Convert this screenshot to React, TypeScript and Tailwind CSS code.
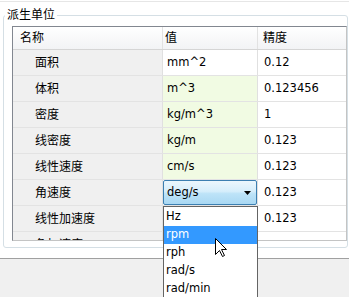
import React from 'react';

type Row = { name: string; value: string; prec: string; green?: boolean; combo?: boolean };

const ROWS: Row[] = [
  { name: '面积', value: 'mm^2', prec: '0.12' },
  { name: '体积', value: 'm^3', prec: '0.123456', green: true },
  { name: '密度', value: 'kg/m^3', prec: '1', green: true },
  { name: '线密度', value: 'kg/m', prec: '0.123', green: true },
  { name: '线性速度', value: 'cm/s', prec: '0.123', green: true },
  { name: '角速度', value: 'deg/s', prec: '0.123', combo: true },
  { name: '线性加速度', value: '', prec: '0.123' },
  { name: '角加速度', value: '', prec: '' },
];

const OPTIONS = ['Hz', 'rpm', 'rph', 'rad/s', 'rad/min'];

const Combo = ({ value }: { value: string }) => (
  <div className="h-full w-full flex items-center justify-between pl-[3px] pr-[5px] border border-[#3c7fb1] rounded-[2px] bg-[linear-gradient(to_bottom,#ecf7fd_0%,#d6eefb_45%,#bde3f8_55%,#a9d8f3_100%)]">
    <span>{value}</span>
    <svg width="7" height="4" viewBox="0 0 7 4">
      <polygon points="0,0 7,0 3.5,4" fill="#000" />
    </svg>
  </div>
);

export default function App() {
  return (
    <div className="relative w-[349px] h-[297px] overflow-hidden bg-white flex flex-col text-[11.5px] text-black font-['DejaVu_Sans','Noto_Sans_CJK_SC',sans-serif]">
      <div className="mt-px border-t border-[#e6e6e6]" />

      {/* group box */}
      <fieldset className="ml-[3px] mr-[1px] mt-[5px] pb-[6px] min-w-0 border border-[#d5dfe5] rounded-[3px]">
        <legend className="ml-px px-[2px] leading-[16px] text-[12px]">派生单位</legend>

        <div className="ml-[8px] mt-[3px] w-[335px] h-[215px] overflow-hidden border border-[#828790] border-r-[#c4c4c4] border-b-[#c4c4c4]">
          {/* header */}
          <div className="grid grid-cols-[150px_95px_88px] h-[23px] border-b border-[#d5d5d5] bg-[linear-gradient(to_bottom,#ffffff,#f2f3f5)] text-[12px]">
            <div className="flex items-center pl-[7px] border-r border-[#e2e2e2]">名称</div>
            <div className="flex items-center pl-[2px] border-r border-[#e2e2e2]">值</div>
            <div className="flex items-center pl-[5px]">精度</div>
          </div>

          {ROWS.map(r => (
            <div key={r.name} className="grid grid-cols-[150px_95px_88px] h-[26px] border-b border-[#e3e3e3]">
              <div className="flex items-center pl-[22px] bg-[#f0f0f0] border-r border-[#e0e0e0] text-[12px]">{r.name}</div>
              <div className={`flex items-center border-r border-[#e0e0e0] ${r.green ? 'bg-[#f1fbe3]' : 'bg-white'} ${r.combo ? '' : 'pl-[4px]'}`}>
                {r.combo ? <Combo value={r.value} /> : r.value}
              </div>
              <div className="flex items-center pl-[6px] bg-white">{r.prec}</div>
            </div>
          ))}
        </div>
      </fieldset>

      {/* bottom panel */}
      <div className="mt-[10px] flex-1 bg-[#f0f0f0] border-t border-[#a0a0a0]" />

      {/* open dropdown list */}
      <div className="absolute left-[163px] top-[206px] w-[95px] h-[95px] pt-px bg-white border border-[#646464]">
        {OPTIONS.map(o => (
          <div key={o} className={`h-[18px] flex items-center pl-[2px] ${o === 'rpm' ? 'bg-[#3399ff] text-white' : ''}`}>
            {o}
          </div>
        ))}
      </div>

      {/* mouse pointer */}
      <svg className="absolute left-[215px] top-[238px]" width="13" height="20" viewBox="0 0 13 20">
        <path d="M0.5 0.5 L0.5 16.5 L4.5 12.5 L7.5 18.5 L9.5 17.5 L6.5 11.5 L11.5 11.5 Z" fill="#fff" stroke="#000" strokeWidth="1" />
      </svg>
    </div>
  );
}
